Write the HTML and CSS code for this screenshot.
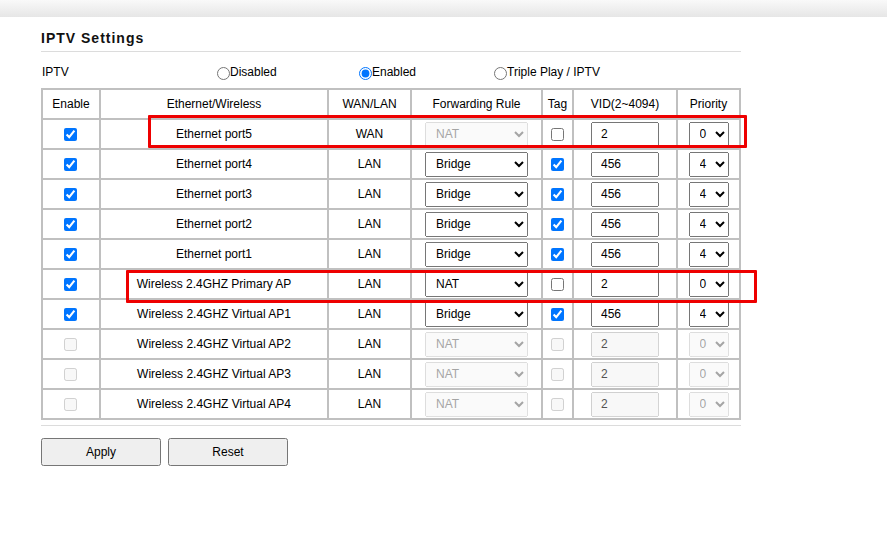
FILE: index.html
```html
<!DOCTYPE html>
<html>
<head>
<meta charset="utf-8">
<title>IPTV Settings</title>
<link rel="stylesheet" href="styles.css">
</head>
<body>
<div class="topbar"></div>
<div class="content">
  <h1 class="title">IPTV Settings</h1>
  <div class="iptv-row">
    <span class="iptv-label">IPTV</span>
    <label class="opt"><input type="radio" name="iptv">Disabled</label>
    <label class="opt"><input type="radio" name="iptv" checked>Enabled</label>
    <label class="opt"><input type="radio" name="iptv">Triple Play / IPTV</label>
  </div>
  <table class="grid">
    <thead>
      <tr>
        <th class="c1">Enable</th>
        <th class="c2">Ethernet/Wireless</th>
        <th class="c3">WAN/LAN</th>
        <th class="c4">Forwarding Rule</th>
        <th class="c5">Tag</th>
        <th class="c6">VID(2~4094)</th>
        <th class="c7">Priority</th>
      </tr>
    </thead>
    <tbody>
      <tr>
        <td><input type="checkbox" checked></td>
        <td>Ethernet port5</td>
        <td>WAN</td>
        <td><select class="rule" disabled><option>NAT</option><option>Bridge</option></select></td>
        <td><input type="checkbox"></td>
        <td><input class="vid" type="text" value="2"></td>
        <td><select class="prio"><option>0</option><option>4</option></select></td>
      </tr>
      <tr>
        <td><input type="checkbox" checked></td>
        <td>Ethernet port4</td>
        <td>LAN</td>
        <td><select class="rule"><option>Bridge</option><option>NAT</option></select></td>
        <td><input type="checkbox" checked></td>
        <td><input class="vid" type="text" value="456"></td>
        <td><select class="prio"><option>4</option><option>0</option></select></td>
      </tr>
      <tr>
        <td><input type="checkbox" checked></td>
        <td>Ethernet port3</td>
        <td>LAN</td>
        <td><select class="rule"><option>Bridge</option><option>NAT</option></select></td>
        <td><input type="checkbox" checked></td>
        <td><input class="vid" type="text" value="456"></td>
        <td><select class="prio"><option>4</option><option>0</option></select></td>
      </tr>
      <tr>
        <td><input type="checkbox" checked></td>
        <td>Ethernet port2</td>
        <td>LAN</td>
        <td><select class="rule"><option>Bridge</option><option>NAT</option></select></td>
        <td><input type="checkbox" checked></td>
        <td><input class="vid" type="text" value="456"></td>
        <td><select class="prio"><option>4</option><option>0</option></select></td>
      </tr>
      <tr>
        <td><input type="checkbox" checked></td>
        <td>Ethernet port1</td>
        <td>LAN</td>
        <td><select class="rule"><option>Bridge</option><option>NAT</option></select></td>
        <td><input type="checkbox" checked></td>
        <td><input class="vid" type="text" value="456"></td>
        <td><select class="prio"><option>4</option><option>0</option></select></td>
      </tr>
      <tr>
        <td><input type="checkbox" checked></td>
        <td>Wireless 2.4GHZ Primary AP</td>
        <td>LAN</td>
        <td><select class="rule"><option>NAT</option><option>Bridge</option></select></td>
        <td><input type="checkbox"></td>
        <td><input class="vid" type="text" value="2"></td>
        <td><select class="prio"><option>0</option><option>4</option></select></td>
      </tr>
      <tr>
        <td><input type="checkbox" checked></td>
        <td>Wireless 2.4GHZ Virtual AP1</td>
        <td>LAN</td>
        <td><select class="rule"><option>Bridge</option><option>NAT</option></select></td>
        <td><input type="checkbox" checked></td>
        <td><input class="vid" type="text" value="456"></td>
        <td><select class="prio"><option>4</option><option>0</option></select></td>
      </tr>
      <tr>
        <td><input type="checkbox" disabled></td>
        <td>Wireless 2.4GHZ Virtual AP2</td>
        <td>LAN</td>
        <td><select class="rule" disabled><option>NAT</option><option>Bridge</option></select></td>
        <td><input type="checkbox" disabled></td>
        <td><input class="vid" type="text" value="2" disabled></td>
        <td><select class="prio" disabled><option>0</option><option>4</option></select></td>
      </tr>
      <tr>
        <td><input type="checkbox" disabled></td>
        <td>Wireless 2.4GHZ Virtual AP3</td>
        <td>LAN</td>
        <td><select class="rule" disabled><option>NAT</option><option>Bridge</option></select></td>
        <td><input type="checkbox" disabled></td>
        <td><input class="vid" type="text" value="2" disabled></td>
        <td><select class="prio" disabled><option>0</option><option>4</option></select></td>
      </tr>
      <tr>
        <td><input type="checkbox" disabled></td>
        <td>Wireless 2.4GHZ Virtual AP4</td>
        <td>LAN</td>
        <td><select class="rule" disabled><option>NAT</option><option>Bridge</option></select></td>
        <td><input type="checkbox" disabled></td>
        <td><input class="vid" type="text" value="2" disabled></td>
        <td><select class="prio" disabled><option>0</option><option>4</option></select></td>
      </tr>
    </tbody>
  </table>
  <div class="actions">
    <button type="button" class="btn">Apply</button>
    <button type="button" class="btn">Reset</button>
  </div>
  <div class="mark mark-wan"></div>
  <div class="mark mark-primary"></div>
</div>
</body>
</html>
```

FILE: styles.css
```css
html, body {
  margin: 0;
  padding: 0;
  background: #ffffff;
}
body {
  font-family: Arial, "Liberation Sans", sans-serif;
  font-size: 12px;
  color: #000;
}
.topbar {
  height: 17px;
  background: linear-gradient(#f9f9f9, #e6e6e6);
}
.content {
  position: relative;
  width: 700px;
  margin-left: 41px;
  padding-top: 12px;
}
.title {
  margin: 0;
  height: 18px;
  line-height: 18px;
  padding-bottom: 4px;
  border-bottom: 1px solid #dcdcdc;
  font-size: 14px;
  font-weight: bold;
  letter-spacing: 1px;
  color: #111;
}
.iptv-row {
  height: 24px;
  padding-top: 12px;
  display: grid;
  grid-template-columns: 176px 142px 135px 1fr;
  align-items: baseline;
  line-height: 16px;
}
.iptv-label {
  padding-left: 1px;
}
.opt input {
  margin: 0;
  width: 13px;
  height: 13px;
  vertical-align: -4px;
}
.grid {
  border-collapse: separate;
  border-spacing: 0;
  table-layout: fixed;
  width: 700px;
  border-top: 2px solid #c0c0c0;
  border-left: 2px solid #c0c0c0;
}
.grid th, .grid td {
  padding: 0;
  height: 28px;
  line-height: 16px;
  text-align: center;
  vertical-align: middle;
  font-weight: normal;
  border-right: 2px solid #c0c0c0;
  border-bottom: 2px solid #c0c0c0;
}
.c1 { width: 56px; }
.c2 { width: 226px; }
.c3 { width: 81px; }
.c4 { width: 129px; }
.c5 { width: 29px; }
.c6 { width: 102px; }
.c7 { width: 61px; }
.grid input[type="checkbox"] {
  margin: 0 1px 0 0;
  width: 13px;
  height: 13px;
  vertical-align: middle;
}
.rule, .prio {
  font-family: Arial, "Liberation Sans", sans-serif;
  font-size: 12px;
  height: 25px;
  padding-left: 6px;
  margin: 0;
  vertical-align: middle;
}
.rule { width: 103px; }
.prio { width: 40px; }
.vid {
  box-sizing: border-box;
  font-family: Arial, "Liberation Sans", sans-serif;
  font-size: 12px;
  width: 68px;
  height: 25px;
  margin: 0;
  padding: 0 0 0 8px;
  vertical-align: middle;
}
.actions {
  margin-top: 5px;
  border-top: 1px solid #dcdcdc;
  padding-top: 12px;
  display: flex;
  gap: 7px;
}
.btn {
  width: 120px;
  height: 28px;
  margin: 0;
  font-family: Arial, "Liberation Sans", sans-serif;
  font-size: 12px;
}
.mark {
  position: absolute;
  border: 3px solid #ee0000;
  border-radius: 1px;
}
.mark-wan {
  left: 107px;
  top: 98px;
  width: 593px;
  height: 27px;
}
.mark-primary {
  left: 85px;
  top: 253px;
  width: 625px;
  height: 27px;
}
```
